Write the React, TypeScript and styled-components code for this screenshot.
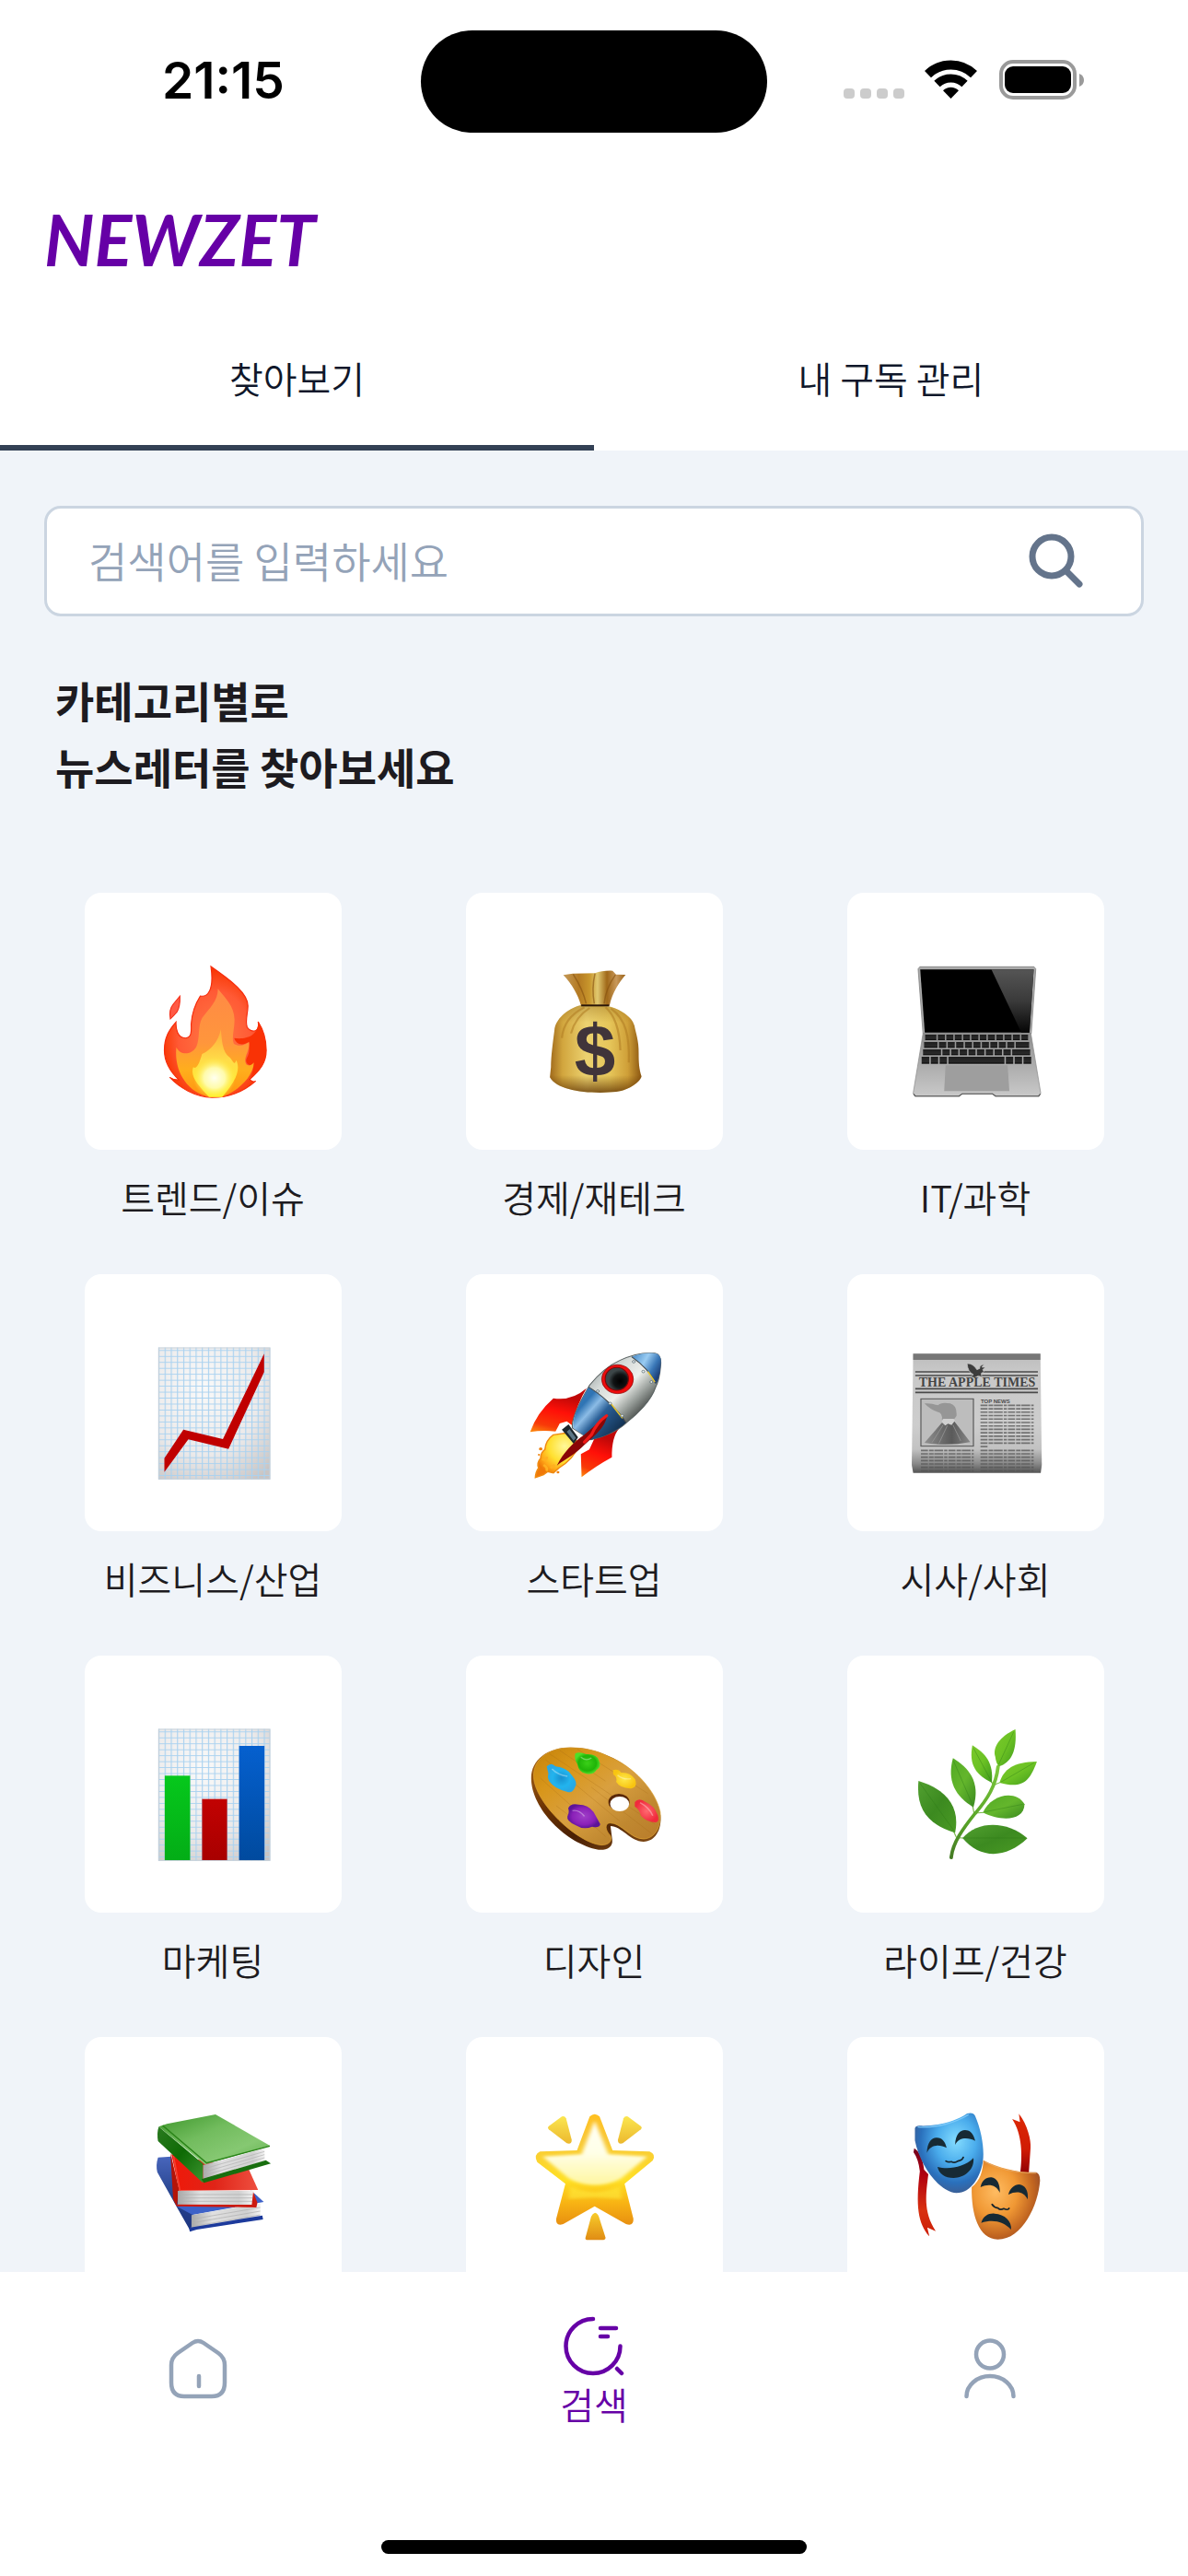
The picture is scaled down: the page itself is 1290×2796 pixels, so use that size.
import React from 'react';
import styled, { createGlobalStyle } from 'styled-components';

const color = {
  purple: '#6600a6',
  ink: '#1d1b20',
  navy: '#0f172a',
  slate: '#334155',
  iconSlate: '#64748b',
  muted: '#94a3b8',
  line: '#cbd5e1',
  page: '#f0f4f9',
};

const GlobalStyle = createGlobalStyle`
  *, *::before, *::after { box-sizing: border-box; }
  html, body { margin: 0; padding: 0; background: #fff; }
  body, button, input { font-family: "Noto Sans CJK KR", sans-serif; font-weight: 350; }
  button { border: 0; margin: 0; padding: 0; background: none; color: inherit; cursor: pointer; }
`;

const Screen = styled.div`
  display: flex;
  flex-direction: column;
  height: 100vh;
  background: #fff;
  color: ${color.ink};
`;

const StatusBar = styled.div`
  display: grid;
  grid-template-columns: 1fr 376px 1fr;
  align-items: center;
  padding-top: 33px;
`;

const Clock = styled.time`
  padding: 0 0 3px 176px;
  font-family: Inter, sans-serif;
  font-size: 55px;
  font-weight: 600;
  line-height: 64px;
  color: #000;
`;

const Island = styled.div`
  height: 111px;
  border-radius: 56px;
  background: #000;
`;

const StatusIcons = styled.div`
  display: flex;
  justify-content: flex-end;
  padding: 0 112px 3px 0;
`;

const Brand = styled.header`
  padding: 80px 48px 43px;
`;

const Logo = styled.h1`
  margin: 0;
  font-family: Lato, sans-serif;
  font-size: 76px;
  font-weight: 700;
  font-style: italic;
  line-height: 72px;
  color: ${color.purple};
`;

const Tabs = styled.div`
  display: grid;
  grid-template-columns: 1fr 1fr;
`;

const Tab = styled.button<{ $active?: boolean }>`
  height: 150px;
  padding-bottom: 3px;
  border-bottom: 6px solid ${(p) => (p.$active ? color.slate : 'transparent')};
  font-size: 40px;
  line-height: 60px;
  color: ${color.navy};
`;

const Content = styled.main`
  flex: 1;
  min-height: 0;
  overflow-y: auto;
  scrollbar-width: none;
  padding-top: 60px;
  background: ${color.page};
`;

const SearchForm = styled.form`
  display: flex;
  align-items: center;
  height: 120px;
  margin: 0 48px;
  padding: 0 56px 0 45px;
  border: 3px solid ${color.line};
  border-radius: 18px;
  background: #fff;
`;

const SearchInput = styled.input`
  flex: 1;
  min-width: 0;
  padding: 0 0 4px;
  border: 0;
  outline: 0;
  background: none;
  font-size: 46px;
  line-height: 72px;
  color: ${color.navy};
  &::placeholder { color: ${color.muted}; opacity: 1; }
`;

const SearchButton = styled.button`
  display: flex;
`;

const Heading = styled.h2`
  margin: 54px 60px 0;
  font-size: 46px;
  font-weight: 700;
  line-height: 72px;
`;

const Grid = styled.div`
  display: grid;
  grid-template-columns: repeat(3, 1fr);
  row-gap: 54px;
  margin-top: 102px;
  padding: 0 24px 48px;
`;

const Category = styled.button`
  display: flex;
  flex-direction: column;
  align-items: center;
  gap: 21px;
  font-size: 40px;
  line-height: 60px;
  color: ${color.ink};
`;

const Card = styled.span`
  display: block;
  width: 279px;
  max-width: 90%;
  aspect-ratio: 1;
  border-radius: 18px;
  background: #fff;
  svg { display: block; width: 100%; height: 100%; }
`;

const BottomBar = styled.footer`
  display: flex;
  flex-direction: column;
  align-items: center;
  padding-bottom: 24px;
  background: #fff;
`;

const NavRow = styled.nav`
  display: grid;
  grid-template-columns: repeat(3, 1fr);
  width: 100%;
  height: 210px;
  margin-bottom: 81px;
`;

const NavItem = styled.button<{ $active?: boolean }>`
  display: flex;
  flex-direction: column;
  align-items: center;
  justify-content: center;
  gap: 9px;
  font-size: 40px;
  line-height: 40px;
  color: ${(p) => (p.$active ? color.purple : color.muted)};
`;

const HomeIndicator = styled.div`
  width: 462px;
  max-width: 60%;
  height: 15px;
  border-radius: 8px;
  background: #000;
`;

/* Drawing sheet: artwork units are finer than card units and start at (x, y). */
function Sheet({ x, y, children }: { x: number; y: number; children: React.ReactNode }) {
  return <g transform={`scale(0.3827 0.3333) translate(${-x} ${-y})`}>{children}</g>;
}

function Art({ children }: { children: React.ReactNode }) {
  return <svg viewBox="0 0 279 279" aria-hidden="true">{children}</svg>;
}

type Stop = [number, string];
function Linear({ id, stops, x2 = 0, y2 = 1 }: { id: string; stops: Stop[]; x2?: number; y2?: number }) {
  return (
    <linearGradient id={id} x1="0" y1="0" x2={x2} y2={y2}>
      {stops.map(([o, c]) => <stop key={o} offset={o} stopColor={c} />)}
    </linearGradient>
  );
}
function Radial({ id, stops, cx = 0.5, cy = 0.5, r = 0.5 }: { id: string; stops: Stop[]; cx?: number; cy?: number; r?: number }) {
  return (
    <radialGradient id={id} cx={cx} cy={cy} r={r}>
      {stops.map(([o, c]) => <stop key={o} offset={o} stopColor={c} />)}
    </radialGradient>
  );
}

function Fire() {
  return (
    <Art>
      <defs>
        <Radial id="fireOut" cx={0.5} cy={0.55} r={0.6} stops={[[0, '#ff7a45'], [0.6, '#ff5a35'], [0.85, '#f93a08'], [1, '#ee2500']]} />
        <Linear id="fireIn" stops={[[0, '#ff8a45'], [0.5, '#ff963c'], [0.75, '#ffae1c'], [1, '#ff9410']]} />
        <Linear id="fireYellow" stops={[[0, '#ffab3c'], [0.45, '#ffdc48'], [1, '#fff02a']]} />
        <radialGradient id="fireGlow"><stop offset="0" stopColor="#fffff0" /><stop offset="0.5" stopColor="#ffffc0" stopOpacity="0.85" /><stop offset="1" stopColor="#fff04a" stopOpacity="0" /></radialGradient>
      </defs>
      <Sheet x={82} y={87}>
        <path fill="url(#fireOut)" stroke="#f62a0a" strokeWidth="3" d="M440 327C500 375 545 415 545 455C545 480 536 505 543 525C552 542 580 545 574 507C590 535 597 570 597 600C597 640 580 665 550 695Q558 706 567 700C530 738 490 754 443 754C395 752 350 722 323 688Q335 697 349 696C325 670 308 635 308 600C308 560 320 535 341 508C340 530 345 560 368 560C385 558 385 540 384 515C386 480 395 450 410 423C430 428 450 405 440 327Z" />
        <path fill="#f93205" d="M574 507C590 535 597 570 597 600C597 640 580 665 552 690C560 670 562 655 560 645C548 655 535 640 542 625C552 605 548 590 548 572C525 590 510 575 506 560C530 565 575 560 574 507Z" />
        <path fill="url(#fireIn)" d="M460 400C480 430 506 455 507 500C507 530 498 560 505 578C520 592 540 580 548 574C552 600 530 625 540 645C550 655 558 645 562 640C560 690 510 738 470 752L435 752C370 735 335 665 342 590C352 615 382 618 398 590C410 565 402 520 415 495C435 465 460 440 460 400Z" />
        <path fill="url(#fireYellow)" d="M468 532C472 565 470 605 495 625C505 640 506 650 512 632C528 670 500 715 472 752L435 752C405 715 380 685 390 655C402 665 410 630 415 612C440 600 462 570 468 532Z" />
        <ellipse cx="450" cy="690" rx="60" ry="66" fill="url(#fireGlow)" />
        <path fill="#ff5a45" stroke="#f4301a" strokeWidth="3" d="M352 424Q353 458 344 475Q333 490 325 498Q320 468 333 450Z" />
      </Sheet>
    </Art>
  );
}

function MoneyBag() {
  return (
    <Art>
      <defs>
        <Linear id="bagBody" x2={1} y2={0} stops={[[0, '#a06a1c'], [0.14, '#d2a63e'], [0.4, '#ecd270'], [0.65, '#e6c65a'], [0.85, '#cf9f38'], [1, '#8a5510']]} />
        <Linear id="bagTop" x2={1} y2={0} stops={[[0, '#c49a5a'], [0.25, '#b47a22'], [0.42, '#c8962c'], [0.55, '#e0c870'], [0.7, '#a06818'], [0.85, '#c8985a'], [1, '#9a6218']]} />
        <Linear id="bagShade" stops={[[0, 'rgba(120,70,0,.3)'], [0.2, 'rgba(120,70,0,0)'], [0.8, 'rgba(100,55,0,0)'], [1, 'rgba(90,45,0,.75)']]} />
      </defs>
      <Sheet x={1164} y={87}>
        <path fill="url(#bagBody)" d="M1490 453C1450 465 1417 500 1415 535C1411 570 1405 620 1405 655L1402 688C1420 724 1480 738 1545 738L1590 735C1630 730 1660 700 1662 685C1655 660 1654 640 1654 610C1655 570 1645 540 1642 520C1635 490 1600 465 1568 457Z" />
        <path fill="url(#bagShade)" d="M1490 453C1450 465 1417 500 1415 535C1411 570 1405 620 1405 655L1402 688C1420 724 1480 738 1545 738L1590 735C1630 730 1660 700 1662 685C1655 660 1654 640 1654 610C1655 570 1645 540 1642 520C1635 490 1600 465 1568 457Z" />
        <g fill="none" stroke="#b07c22" strokeWidth="6" opacity=".55">
          <path d="M1500 460C1465 480 1440 510 1436 560" /><path d="M1515 462C1490 480 1470 510 1462 545" />
          <path d="M1560 460C1590 490 1600 540 1602 600" /><path d="M1575 464C1620 500 1628 560 1626 640" />
        </g>
        <path fill="url(#bagTop)" d="M1440 355L1467 350L1530 349Q1550 340 1580 341L1590 353L1617 354C1598 380 1580 410 1571 455L1490 453C1482 420 1465 385 1440 355Z" />
        <g fill="none" stroke="#85500f" strokeWidth="4" opacity=".6">
          <path d="M1468 352Q1495 400 1505 448" /><path d="M1530 350Q1520 400 1528 448" /><path d="M1588 354Q1560 400 1556 448" />
        </g>
        <path d="M1491 454H1570" stroke="#2a1608" strokeWidth="6" />
      </Sheet>
      <text x="140" y="199" textAnchor="middle" fontFamily="Liberation Sans, sans-serif" fontWeight="700" fontSize="80" fill="#40343a">$</text>
    </Art>
  );
}

const keyRows: { y: number; h: number; keys: number[] }[] = [
  { y: 549, h: 18, keys: [898, 934, 958, 982, 1006, 1029, 1053, 1076, 1100, 1123, 1147, 1171, 1194] },
  { y: 573, h: 19, keys: [895, 937, 962, 986, 1011, 1035, 1059, 1083, 1107, 1131, 1155, 1197] },
  { y: 597, h: 19, keys: [892, 947, 972, 996, 1021, 1045, 1070, 1095, 1120, 1145, 1200] },
  { y: 621, h: 23, keys: [888, 914, 939, 964, 1127, 1152, 1177, 1203] },
];

function Laptop() {
  return (
    <Art>
      <defs>
        <Linear id="glare" stops={[[0, '#555'], [0.5, '#3a3a3a'], [1, '#060606']]} />
        <Linear id="base" stops={[[0, '#8d8d8d'], [0.45, '#a9a9a9'], [1, '#c9c9c9']]} />
        <Linear id="key" stops={[[0, '#1d1d1d'], [0.7, '#2a2a2a'], [1, '#050505']]} />
      </defs>
      <Sheet x={678} y={87}>
        <path fill="#aaa" stroke="#777" strokeWidth="2" d="M884 328H1208L1213 335L1200 546H893L879 335Z" />
        <path d="M885 337H1207L1195 542H898Z" />
        <path fill="url(#glare)" d="M1087 337H1207L1195 542H1172Z" />
        <path fill="url(#base)" stroke="#8a8a8a" strokeWidth="2" d="M893 545H1199L1227 740L1222 750H1098L1090 742H1004L996 750H870L865 740Z" />
        {keyRows.map((r) => (
          <g key={r.y}>
            {r.keys.slice(0, -1).map((k, i) => (
              <rect key={k} x={k + 1} y={r.y} width={r.keys[i + 1] - k - 4} height={r.h} fill="url(#key)" />
            ))}
          </g>
        ))}
        <path fill="#9e9e9e" d="M957 649H1133L1138 733H953Z" />
        <path fill="none" stroke="#555" strokeWidth="3" d="M866 742L871 749H995L1004 742H1090L1099 749H1221L1226 742" />
      </Sheet>
    </Art>
  );
}

function GraphPaper({ id, y }: { id: string; y: number }) {
  return (
    <>
      <defs>
        <pattern id={`${id}Grid`} x="291" y={y + 8} width="17.6" height="19.4" patternUnits="userSpaceOnUse">
          <path d="M1.5 0V19.4M0 1.5H17.6" stroke="#aad2f0" strokeWidth="3" fill="none" />
        </pattern>
        <Radial id={`${id}Paper`} cx={0.4} cy={0.3} r={0.85} stops={[[0, '#f9f9f9'], [0.6, '#eceaea'], [1, '#c9c5c4']]} />
      </defs>
      <rect x="291" y={y} width="317" height="429" fill={`url(#${id}Paper)`} />
      <rect x="291" y={y} width="317" height="429" fill={`url(#${id}Grid)`} />
      <rect x="292" y={y + 1} width="315" height="427" fill="none" stroke="#c4d0da" strokeWidth="3" />
    </>
  );
}

function RisingChart() {
  return (
    <Art>
      <Sheet x={82} y={69}>
        <GraphPaper id="rise" y={308} />
        <path fill="#c00000" d="M308 668L362 575L474 606L591 328V388L490 638L376 607L308 713Z" />
      </Sheet>
    </Art>
  );
}

function BarChart() {
  return (
    <Art>
      <defs>
        <Linear id="barG" stops={[[0, '#06c81c'], [1, '#03ad16']]} />
        <Linear id="barR" stops={[[0, '#c20202'], [1, '#a80000']]} />
        <Linear id="barB" stops={[[0, '#0560cf'], [1, '#004a9e']]} />
      </defs>
      <Sheet x={82} y={51}>
        <GraphPaper id="bars" y={290} />
        <rect x="309" y="442" width="72" height="275" fill="url(#barG)" />
        <rect x="415" y="518" width="71" height="199" fill="url(#barR)" />
        <rect x="520" y="345" width="72" height="372" fill="url(#barB)" />
      </Sheet>
    </Art>
  );
}

function Rocket() {
  return (
    <Art>
      <defs>
        <Linear id="hull" x2={1} y2={1} stops={[[0.1, '#7d8688'], [0.35, '#d5dad8'], [0.5, '#eef0ec'], [0.62, '#9aa09c'], [0.78, '#2a2e2c']]} />
        <Linear id="nose" x2={1} y2={0.6} stops={[[0, '#3f84c4'], [0.45, '#9accf2'], [0.75, '#3a78b8'], [1, '#1c3f78']]} />
        <Linear id="tail" x2={0.9} y2={0.8} stops={[[0, '#3c7cb8'], [0.3, '#2f74b4'], [0.45, '#8cbce6'], [0.62, '#2a5f96'], [1, '#123050']]} />
        <Linear id="fin" x2={-0.3} stops={[[0, '#c00808'], [0.35, '#ff1008'], [0.7, '#f83a08'], [1, '#ffb010']]} />
        <Radial id="flame" cx={0.65} cy={0.3} r={0.7} stops={[[0, '#fff89a'], [0.5, '#ffe030'], [0.8, '#ffa818'], [1, '#f07808']]} />
        <Radial id="port" cx={0.65} cy={0.6} stops={[[0, '#000'], [0.6, '#101314'], [1, '#3c4648']]} />
      </defs>
      <Sheet x={1164} y={69}>
        <path fill="url(#flame)" stroke="#f08a10" strokeWidth="4" d="M1412 592L1450 586L1488 622Q1468 672 1428 700L1412 716L1396 712L1384 722L1361 731Q1362 712 1370 700Q1364 684 1376 668Q1376 650 1388 640Q1390 610 1412 592Z" />
        <g fill="#ee8008"><circle cx="1376" cy="638" r="5" /><circle cx="1371" cy="657" r="3" /><circle cx="1425" cy="714" r="4" /></g>
        <path fill="none" stroke="#ffb020" strokeWidth="7" d="M1384 690Q1398 700 1392 710M1380 672Q1392 676 1394 664M1404 700L1416 690" />
        <path fill="url(#fin)" d="M1412 473Q1465 482 1506 440Q1480 490 1464 560L1450 548L1430 555L1418 581Q1380 577 1346 583Q1365 520 1412 473Z" />
        <path fill="url(#fin)" d="M1530 600L1598 572Q1577 600 1578 665Q1530 695 1492 730L1490 655L1514 640Z" />
        <path fill="url(#hull)" stroke="#5c6464" strokeWidth="3" d="M1700 326C1716 328 1718 350 1716 370C1714 400 1708 425 1701 440C1690 480 1650 525 1620 552C1600 575 1560 598 1518 608L1466 570C1462 540 1485 490 1515 430C1540 395 1565 368 1600 350C1640 328 1670 323 1700 326Z" />
        <path fill="url(#nose)" d="M1634 338C1660 325 1690 323 1705 328C1718 335 1718 350 1716 370C1715 395 1708 420 1703 425C1688 390 1664 362 1634 338Z" />
        <path fill="url(#tail)" d="M1512 437C1545 458 1600 515 1618 553C1590 582 1555 600 1517 608L1468 570C1465 530 1490 480 1512 437Z" />
        <path fill="none" stroke="#40464a" strokeWidth="3" d="M1634 338C1664 362 1688 390 1702 425M1512 437C1545 458 1600 515 1618 553" />
        <path fill="none" stroke="#e8c830" strokeWidth="4" d="M1680 386L1700 420M1576 492L1608 538" />
        <g fill="#eef4f6" stroke="#506068" strokeWidth="2"><circle cx="1640" cy="354" r="4" /><circle cx="1667" cy="386" r="4" /><circle cx="1690" cy="420" r="4" /><circle cx="1538" cy="450" r="4" /><circle cx="1573" cy="490" r="4" /><circle cx="1607" cy="530" r="4" /></g>
        <ellipse cx="1594" cy="411" rx="45" ry="47" fill="#ee0c0c" stroke="#8a0a0a" strokeWidth="2" />
        <ellipse cx="1592" cy="410" rx="33" ry="37" fill="url(#port)" stroke="#7c0808" strokeWidth="3" />
        <path fill="#1c262c" d="M1436 575L1455 558L1482 600L1470 622Z" />
        <path fill="#5c7686" d="M1450 582L1458 574L1476 602L1469 611Z" />
        <path fill="#8a0606" d="M1565 526C1560 570 1524 600 1500 625C1475 655 1445 672 1422 692C1440 650 1470 615 1500 592Z" />
        <path fill="none" stroke="#f01a18" strokeWidth="9" strokeLinecap="round" d="M1563 530Q1535 552 1520 592L1500 616" />
      </Sheet>
    </Art>
  );
}

const upperColumn = Array.from({ length: 13 }, (_, i) => 496 + i * 11.2);
const lowerColumn = Array.from({ length: 7 }, (_, i) => 643 + i * 11);

function Newspaper() {
  return (
    <Art>
      <defs>
        <Linear id="news" stops={[[0, '#bcbcbc'], [0.15, '#c8c8c8'], [0.6, '#cdcdcd'], [0.8, '#c2c2c2'], [0.92, '#8a8a8a'], [1, '#555']]} />
        <Linear id="volcano" x2={1} y2={0} stops={[[0, '#909090'], [0.4, '#6a6a6a'], [0.6, '#5a5a5a'], [1, '#888']]} />
      </defs>
      <Sheet x={678} y={69}>
        <path fill="url(#news)" d="M865 328H1226L1230 690L1227 716H865L861 690Z" />
        <rect x="865" y="328" width="361" height="20" fill="#777" />
        <path stroke="#4a4a4a" strokeWidth="5" d="M871 387H1219M871 399H1219M871 442H1219M871 454H1219" />
        <path fill="#3c3c3c" stroke="#c6c6c6" strokeWidth="2" d="M1018 360Q1034 358 1046 380L1054 376Q1052 366 1066 362L1060 372L1070 372L1062 380L1066 386L1058 392L1060 404L1050 400L1040 406L1028 404L1036 396Q1020 388 1018 360Z" />
        <rect x="887" y="475" width="149" height="154" fill="#bdbdbd" stroke="#555" strokeWidth="3" />
        <path fill="#969696" d="M897 490Q915 488 935 496Q945 484 970 490Q990 496 988 530Q984 540 975 544L946 542Q950 528 940 520Q915 512 897 490Z" />
        <path fill="#d0d0d0" d="M950 540H980L992 566L940 570Z" />
        <path fill="url(#volcano)" d="M947 552L956 562L964 556L974 560L982 548L1027 616Q960 630 897 618Z" />
        <path stroke="#9c9c9c" strokeWidth="2" fill="none" d="M950 560L918 618M962 562L938 620M978 560L1000 612" />
        <g stroke="#555" strokeWidth="5" strokeDasharray="20 3 13 2 25 3 9 3" opacity=".75">
          {upperColumn.map((y, i) => <path key={y} d={`M1056 ${y}H${i === 12 ? 1078 : 1207}`} />)}
          {lowerColumn.map((y) => <path key={y} d={`M1056 ${y}H1207M887 ${y}H1037`} />)}
        </g>
      </Sheet>
      <text x="141" y="122" textAnchor="middle" fontFamily="Liberation Serif, serif" fontWeight="700" fontSize="14" fill="#444">THE APPLE TIMES</text>
      <text x="145" y="140" fontFamily="Liberation Sans, sans-serif" fontWeight="700" fontSize="6" fill="#4a4a4a">TOP NEWS</text>
    </Art>
  );
}

function Palette() {
  return (
    <Art>
      <defs>
        <Linear id="wood" x2={1} y2={1} stops={[[0, '#c4820a'], [0.25, '#d8961a'], [0.5, '#d9a040'], [0.75, '#c08830'], [1, '#b87a2a']]} />
        <Linear id="woodEdge" x2={1} stops={[[0, '#b06a18'], [0.35, '#6a3204'], [0.6, '#4a2004'], [1, '#8a5218']]} />
        <Radial id="pg" stops={[[0, '#3ad018'], [0.7, '#20b408'], [1, '#4ee028']]} />
        <Radial id="pb" stops={[[0, '#1890d0'], [0.6, '#22b4ee'], [1, '#28a8e4']]} />
        <Radial id="pp" stops={[[0, '#a040c8'], [0.7, '#8a20b8'], [1, '#5c1498']]} />
        <Radial id="py" stops={[[0, '#ffe84a'], [1, '#f8c410']]} />
        <Radial id="pr" stops={[[0, '#ff6a70'], [1, '#f02a3c']]} />
      </defs>
      <Sheet x={1164} y={51}>
        <path fill="url(#woodEdge)" d="M1349 450C1349 390 1395 350 1460 350C1500 350 1535 360 1568 378C1640 412 1705 500 1716 570C1720 620 1700 656 1668 657C1630 656 1605 606 1574 606L1579 650C1582 676 1560 686 1540 683C1450 665 1349 550 1349 450Z" />
        <path fill="url(#wood)" stroke="#dca030" strokeWidth="2" d="M1356 445C1354 388 1400 351 1460 351C1500 351 1535 360 1568 379C1640 412 1702 490 1715 560C1719 610 1700 646 1668 648C1630 648 1605 595 1572 596C1556 598 1560 622 1573 636C1582 655 1568 668 1548 668C1480 662 1358 530 1356 445Z" />
        <g fill="none" stroke="#a86c14" strokeWidth="2" opacity=".4">
          <path d="M1390 390L1600 590M1400 370L1700 600M1430 360L1560 460M1375 450L1560 640M1480 356L1680 500M1420 540L1500 610M1520 480L1690 630" />
        </g>
        <ellipse cx="1598" cy="528" rx="30" ry="27" fill="#5a2808" /><ellipse cx="1600" cy="534" rx="27" ry="24" fill="#fff" />
        <path fill="url(#pg)" d="M1474 370Q1485 362 1505 372Q1535 370 1541 392Q1550 412 1534 424Q1526 440 1506 436Q1484 432 1480 404Q1470 388 1474 370Z" />
        <path fill="url(#pb)" d="M1393 412Q1406 396 1418 412Q1450 416 1464 440Q1482 464 1474 478Q1466 502 1450 494Q1416 486 1400 460Q1394 446 1398 436Z" />
        <path fill="url(#pp)" d="M1454 548Q1460 530 1484 536Q1510 536 1526 560L1545 600Q1542 614 1522 608Q1498 620 1476 604Q1448 590 1452 574Q1458 560 1454 548Z" />
        <path fill="url(#py)" d="M1581 424Q1596 418 1604 432Q1630 430 1644 454Q1652 482 1630 484Q1600 482 1590 462Q1594 446 1582 438Z" />
        <path fill="url(#pr)" d="M1643 528Q1654 512 1674 528Q1698 540 1708 570Q1714 592 1702 594Q1678 594 1660 572Q1658 554 1643 542Z" />
        <g fill="none" stroke="#fff" strokeOpacity=".35" strokeWidth="4">
          <path d="M1490 382Q1505 396 1520 384M1408 420Q1425 440 1452 444M1466 556Q1484 552 1500 574M1594 440Q1610 456 1632 452M1658 530Q1684 546 1694 572" />
        </g>
      </Sheet>
    </Art>
  );
}

const leaves = [
  { d: 'M1155 291C1110 315 1090 350 1098 380Q1100 400 1108 412C1144 400 1160 360 1155 291Z', v: 'M1150 300L1108 405', f: 'leafL' },
  { d: 'M1033 343C1070 370 1094 400 1088 465C1045 440 1022 410 1033 343Z', v: 'M1036 352L1086 458', f: 'leafL' },
  { d: 'M1216 396C1150 398 1122 420 1110 465C1172 484 1195 465 1216 396Z', v: 'M1208 400L1114 463', f: 'leafL' },
  { d: 'M978 385C1020 415 1058 460 1036 545C985 510 960 460 978 385Z', v: 'M980 395L1034 538', f: 'leafM' },
  { d: 'M880 459C955 485 1000 540 984 628C905 600 873 550 880 459Z', v: 'M884 466L980 620', f: 'leafD' },
  { d: 'M1063 562C1085 505 1155 485 1181 535C1180 592 1110 590 1063 562Z', v: 'M1068 560L1176 535', f: 'leafM' },
  { d: 'M1005 645C1050 585 1135 590 1189 646C1130 712 1055 715 1005 645Z', v: 'M1010 645H1182', f: 'leafD' },
];

function Herb() {
  return (
    <Art>
      <defs>
        <Linear id="leafL" x2={1} y2={1} stops={[[0, '#7ac82c'], [0.5, '#6cc224'], [1, '#3f9a1c']]} />
        <Linear id="leafM" x2={1} y2={1} stops={[[0, '#52aa24'], [0.5, '#64b62c'], [1, '#3a8a20']]} />
        <Linear id="leafD" x2={1} y2={1} stops={[[0, '#52a030'], [0.5, '#3c8a20'], [1, '#4a9a24']]} />
        <Linear id="stem" stops={[[0, '#7cc83c'], [0.6, '#58a428'], [1, '#447a24']]} />
      </defs>
      <Sheet x={678} y={51}>
        <g fill="none" stroke="#78b848" strokeWidth="3"><path d="M1088 462L1092 478M1112 464L1095 472M1034 542L1038 566M1066 562L1040 564M980 624L988 644M1008 645L990 644" /></g>
        <path fill="none" stroke="url(#stem)" strokeWidth="10" strokeLinecap="round" d="M973 709C977 660 1008 612 1040 566C1075 520 1100 475 1106 412" />
        {leaves.map((l) => (
          <g key={l.v}>
            <path d={l.d} fill={`url(#${l.f})`} />
            <path d={l.v} fill="none" stroke="#2f7a18" strokeOpacity=".55" strokeWidth="2" />
          </g>
        ))}
      </Sheet>
    </Art>
  );
}

function Books() {
  return (
    <Art>
      <defs>
        <Linear id="bkG" x2={1} stops={[[0, '#3c962a'], [0.4, '#72bc5e'], [0.7, '#86c872'], [1, '#5cac48']]} />
        <Linear id="bkGs" x2={1} stops={[[0, '#2a7a20'], [0.5, '#0e6a04'], [1, '#3c9430']]} />
        <Linear id="bkR" x2={1} y2={0} stops={[[0, '#f01808'], [0.5, '#e02418'], [1, '#ee5040']]} />
        <Linear id="pages" x2={1} y2={0} stops={[[0, '#a8a8a8'], [0.3, '#e0e0e0'], [0.8, '#d0d0d0'], [1, '#f4f4f4']]} />
        <Linear id="bkB" stops={[[0, '#4866bc'], [0.5, '#28448e'], [1, '#1c3480']]} />
      </defs>
      <Sheet x={82} y={63}>
        <path fill="url(#bkB)" d="M290 455L328 452L345 560L390 640L383 697L345 620L288 503Q283 480 290 455Z" />
        <path fill="#3e62c8" d="M345 616L555 563L590 600L388 642Z" />
        <path fill="url(#pages)" d="M385 643L582 604L580 648L385 688Z" />
        <path stroke="#b0b0b0" strokeWidth="2" d="M388 656L580 618M388 668L580 630M388 680L580 642" />
        <path fill="#1c3a9c" d="M380 697L378 684L586 644L588 657L400 690Z" />
        <path fill="url(#bkR)" d="M328 445L548 495L574 561L350 563Z" />
        <path fill="#b41408" d="M325 440L350 560L343 614L333 592Z" />
        <path fill="none" stroke="#f44030" strokeWidth="4" d="M334 450L352 562" />
        <path fill="url(#pages)" d="M346 564H562V609H346Z" />
        <path stroke="#b0b0b0" strokeWidth="2" d="M352 576H558M352 587H558M352 598H558" />
        <path fill="#cc1a10" d="M340 608L556 609L560 568L572 602L569 618L345 614Z" />
        <path fill="url(#bkGs)" d="M292 355Q286 376 290 402L417 538L418 476Z" />
        <path fill="url(#bkG)" d="M292 355L315 346L453 315L608 417L423 478Z" />
        <path fill="none" stroke="#2a8418" strokeWidth="4" d="M303 351L428 473L607 418" />
        <path fill="url(#pages)" d="M418 480L592 426L594 466L418 526Z" />
        <path stroke="#b4b4b4" strokeWidth="2" d="M420 492L592 436M420 503L592 446M420 514L592 456" />
        <path fill="#186e0e" d="M413 526L596 464L610 475L420 538Z" />
      </Sheet>
    </Art>
  );
}

function Star() {
  return (
    <Art>
      <defs>
        <Linear id="star" stops={[[0, '#ffc020'], [0.25, '#f8c838'], [0.6, '#ffe024'], [0.8, '#f8b414'], [1, '#e89010']]} />
        <Linear id="shine" stops={[[0, '#fffff4'], [0.5, '#ffffe8'], [1, '#fff6a0']]} />
        <Linear id="ray" stops={[[0, '#fbe650'], [1, '#ecb82e']]} />
        <Linear id="rayLow" stops={[[0, '#f8cc2a'], [1, '#e08c14']]} />
        <filter id="soft"><feGaussianBlur stdDeviation="5" /></filter>
      </defs>
      <Sheet x={1164} y={63}>
        <path fill="url(#star)" d="M1515 322Q1529 306 1543 322L1580 432L1685 436Q1704 445 1694 465L1614 541L1639 655Q1640 680 1618 672L1529 614L1440 672Q1418 680 1420 655L1446 541L1366 470Q1355 446 1374 436L1479 432Z" />
        <path fill="url(#shine)" filter="url(#soft)" d="M1529 335L1568 445L1678 452L1606 522C1565 552 1495 552 1454 522L1382 452L1492 445Z" />
        <path fill="#ffe93a" opacity=".6" filter="url(#soft)" d="M1460 550Q1529 585 1600 550L1606 590L1529 585L1455 590Z" />
        <path fill="url(#ray)" d="M1398 354L1436 322Q1444 319 1448 328L1464 398Q1464 414 1450 409L1399 364Q1394 359 1398 354Z" />
        <path fill="url(#ray)" d="M1661 354L1623 322Q1615 319 1611 328L1595 398Q1595 414 1609 409L1660 364Q1665 359 1661 354Z" />
        <path fill="url(#rayLow)" d="M1530 635Q1538 637 1541 648L1560 716Q1560 724 1550 724H1511Q1501 724 1503 716L1519 648Q1523 637 1530 635Z" />
      </Sheet>
    </Art>
  );
}

function Masks() {
  return (
    <Art>
      <defs>
        <Radial id="mb" cx={0.6} cy={0.35} r={0.65} stops={[[0, '#84dcff'], [0.45, '#4aacec'], [0.8, '#2a70bc'], [1, '#3a6098']]} />
        <Radial id="mo" cx={0.35} cy={0.4} r={0.7} stops={[[0, '#ffbc62'], [0.45, '#f09834'], [0.8, '#c06420'], [1, '#9a4e28']]} />
        <Linear id="rb1" stops={[[0, '#70001c'], [0.3, '#b00010'], [0.7, '#d83010'], [1, '#cc1c04']]} />
        <Linear id="rb2" stops={[[0, '#dc2804'], [0.6, '#d01c04'], [1, '#900004']]} />
      </defs>
      <Sheet x={678} y={63}>
        <path fill="url(#rb1)" d="M868 425Q890 440 896 495L908 510C902 570 892 630 929 695L905 683L911 712C878 670 872 610 884 500Q880 460 866 438Z" />
        <path fill="url(#rb2)" d="M1165 313C1190 350 1200 400 1198 425L1193 506H1169C1175 450 1175 380 1146 330L1168 340Z" />
        <path fill="url(#mb)" d="M870 360Q872 352 882 352C930 355 985 338 1018 312Q1035 306 1041 320C1060 370 1067 430 1063 465C1058 515 1030 571 988 571C940 568 885 485 870 400Z" />
        <path fill="url(#mo)" d="M1064 464C1110 490 1160 505 1213 503Q1225 506 1225 530C1220 610 1175 722 1105 722C1050 720 1030 640 1031 552C1055 530 1063 500 1064 464Z" />
        <g fill="#172a34">
          <path d="M904 440C905 405 918 390 932 391C948 391 956 405 960 424C940 412 915 412 904 440Z" />
          <path d="M984 414C985 380 998 366 1012 366C1028 366 1037 380 1041 401C1022 390 995 388 984 414Z" />
          <path d="M934 486C965 495 1010 488 1036 457C1040 495 1010 522 980 522C955 522 938 508 934 486Z" />
          <path d="M1056 552C1060 530 1072 519 1087 520C1102 522 1112 540 1111 570C1100 544 1080 540 1056 552Z" />
          <path d="M1135 576C1140 555 1152 543 1166 543C1182 545 1193 562 1190 592C1180 568 1160 562 1135 576Z" />
          <path d="M1058 668C1064 645 1080 636 1096 638C1125 640 1145 662 1143 690C1120 662 1090 656 1058 668Z" />
        </g>
        <g fill="none" stroke="#16242c" strokeWidth="5" strokeLinejoin="round" strokeLinecap="round">
          <path d="M958 467Q965 472 974 469Q982 475 992 467Q1005 464 1007 455" />
          <path d="M1089 608Q1094 618 1106 620Q1112 628 1122 622Q1134 628 1137 621" />
        </g>
        <path fill="none" stroke="#7cc8f8" strokeWidth="4" d="M878 356C930 360 985 342 1022 316" />
        <path fill="none" stroke="#e8a860" strokeWidth="3" d="M1068 470C1110 494 1160 508 1214 506" />
      </Sheet>
    </Art>
  );
}

const categories: { name: string; label?: string; Icon: () => React.JSX.Element }[] = [
  { name: '트렌드/이슈', label: '트렌드/이슈', Icon: Fire },
  { name: '경제/재테크', label: '경제/재테크', Icon: MoneyBag },
  { name: 'IT/과학', label: 'IT/과학', Icon: Laptop },
  { name: '비즈니스/산업', label: '비즈니스/산업', Icon: RisingChart },
  { name: '스타트업', label: '스타트업', Icon: Rocket },
  { name: '시사/사회', label: '시사/사회', Icon: Newspaper },
  { name: '마케팅', label: '마케팅', Icon: BarChart },
  { name: '디자인', label: '디자인', Icon: Palette },
  { name: '라이프/건강', label: '라이프/건강', Icon: Herb },
  { name: '도서', Icon: Books },
  { name: '스타', Icon: Star },
  { name: '문화', Icon: Masks },
];

function StatusGlyphs() {
  return (
    <svg width="262" height="44" viewBox="0 0 262 44" aria-hidden="true">
      {[0, 18, 36, 54].map((x) => <rect key={x} x={x} y="31" width="12" height="11" rx="4" fill="#ccc" />)}
      <g transform="translate(88 0)">
        <path d="M3.5 15.6A36 36 0 0 1 53.5 15.6" fill="none" stroke="#000" strokeWidth="10" />
        <path d="M13.5 26A21.5 21.5 0 0 1 43.5 26" fill="none" stroke="#000" strokeWidth="9" />
        <path d="M28.5 42L20 33.2A12 12 0 0 1 37 33.2Z" />
      </g>
      <rect x="171" y="2" width="80" height="39" rx="13" fill="none" stroke="#9a9a9a" strokeWidth="4" />
      <rect x="175" y="7" width="72" height="29" rx="9" />
      <path d="M256 15Q261 17 261 22T256 29Z" fill="#9a9a9a" />
    </svg>
  );
}

function SearchGlyph() {
  return (
    <svg width="72" height="72" viewBox="0 0 72 72" fill="none" stroke={color.iconSlate} strokeWidth="7" strokeLinecap="round" aria-hidden="true">
      <circle cx="31" cy="31" r="21" />
      <path d="M47 47L61 61" />
    </svg>
  );
}

function NavGlyph({ children }: { children: React.ReactNode }) {
  return (
    <svg width="66" height="66" viewBox="0 0 66 66" fill="none" stroke="currentColor" strokeWidth="4.5" strokeLinecap="round" strokeLinejoin="round" aria-hidden="true">
      {children}
    </svg>
  );
}

export default function App() {
  return (
    <Screen>
      <GlobalStyle />
      <StatusBar>
        <Clock>21:15</Clock>
        <Island />
        <StatusIcons><StatusGlyphs /></StatusIcons>
      </StatusBar>
      <Brand><Logo>NEWZET</Logo></Brand>
      <Tabs role="tablist">
        <Tab type="button" role="tab" aria-selected="true" $active>찾아보기</Tab>
        <Tab type="button" role="tab" aria-selected="false">내 구독 관리</Tab>
      </Tabs>
      <Content>
        <SearchForm role="search" onSubmit={(e) => e.preventDefault()}>
          <SearchInput type="text" aria-label="검색어" placeholder="검색어를 입력하세요" />
          <SearchButton type="submit" aria-label="검색"><SearchGlyph /></SearchButton>
        </SearchForm>
        <Heading>카테고리별로<br />뉴스레터를 찾아보세요</Heading>
        <Grid>
          {categories.map(({ name, label, Icon }) => (
            <Category key={name} type="button" aria-label={name}>
              <Card><Icon /></Card>
              {label && <span>{label}</span>}
            </Category>
          ))}
        </Grid>
      </Content>
      <BottomBar>
        <NavRow>
          <NavItem type="button" aria-label="홈">
            <NavGlyph>
              <path d="M27 5Q33 1 39 5L55 16Q62 21 62 29V48Q62 63 48 63H18Q4 63 4 48V29Q4 21 11 16Z" />
              <path d="M34 41V52" />
            </NavGlyph>
          </NavItem>
          <NavItem type="button" $active aria-current="page">
            <NavGlyph>
              <path d="M32 3A29.500 29.500 0 1 0 61.500 32.500" />
              <path d="M40 13H57M40 22H48M58 57L63 62" />
            </NavGlyph>
            <span>검색</span>
          </NavItem>
          <NavItem type="button" aria-label="내 정보">
            <NavGlyph>
              <circle cx="33" cy="17.500" r="15" />
              <path d="M7.500 63A25.500 22 0 0 1 58.500 63" />
            </NavGlyph>
          </NavItem>
        </NavRow>
        <HomeIndicator />
      </BottomBar>
    </Screen>
  );
}
